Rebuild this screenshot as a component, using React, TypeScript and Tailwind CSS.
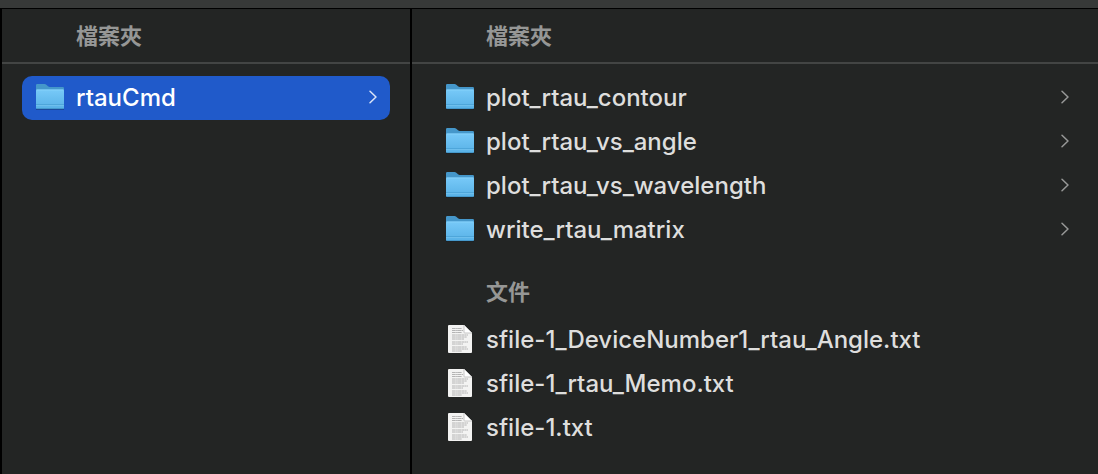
import React from "react";

type Entry = { name: string; kind: "folder" | "text"; selected?: boolean };

function FolderIcon() {
  return (
    <svg viewBox="0 1 32 32" className="size-8 shrink-0" aria-hidden="true">
      <defs>
        <linearGradient id="folderFront" x1="0" y1="0" x2="0" y2="1">
          <stop offset="0" stopColor="#77c9f8" />
          <stop offset="1" stopColor="#58b1e6" />
        </linearGradient>
      </defs>
      <path d="M2 28.5h28" stroke="#000" strokeOpacity="0.25" />
      <path d="M2 4.2Q2 3 3.2 3h7.3q1 0 1.8.7L14 5.2q.8.8 1.8.8h13q1.2 0 1.2 1.2V14H2z" fill="#4597ca" />
      <path d="M2 9.8Q2 8.6 3.2 8.6h25.6q1.2 0 1.2 1.2v17q0 1.2-1.2 1.2H3.2Q2 28 2 26.8z" fill="url(#folderFront)" />
      <path d="M2.5 9h27" stroke="#8bd4fb" strokeWidth="0.8" />
      <path d="M2 23.5h28" stroke="#489fd3" strokeWidth="0.7" />
      <path d="M2 24.5h28" stroke="#72c2ee" strokeWidth="0.8" />
      <path d="M2.6 27.6h26.8" stroke="#3f8fc2" strokeWidth="0.8" />
    </svg>
  );
}

function TextFileIcon() {
  return (
    <svg viewBox="0 1 32 32" className="size-8 shrink-0" aria-hidden="true">
      <path d="M4 3q0-1 1-1h15l8 8v19q0 1-1 1H5q-1 0-1-1z" fill="#f3f3f2" />
      <g stroke="#b4b4b4" strokeWidth="1" strokeDasharray="3 .3 1.6 .3 4 .3">
        <path d="M8 5.5h10M8 7.5h11M8 9.5h10M8 12h16M8 14h15M8 16h12M8 19h16M8 21h11M8 24h15M8 26h16M8 28h10" />
      </g>
      <path d="M20 2l8 8h-7.2q-.8 0-.8-.8z" fill="#fff" />
      <path d="M20 2v7.2q0 .8.8.8H28" fill="none" stroke="#b9b9b9" strokeWidth="0.8" />
    </svg>
  );
}

function Chevron({ bright }: { bright?: boolean }) {
  return (
    <svg viewBox="0 1 10 16" className={`h-4 w-2.5 shrink-0 ${bright ? "text-[#dbe5f8]" : "text-[#989998]"}`} aria-hidden="true">
      <path d="M2 2.3l6 5.7-6 5.7" fill="none" stroke="currentColor" strokeWidth="1.5" strokeLinecap="round" strokeLinejoin="round" />
    </svg>
  );
}

function Row({ entry }: { entry: Entry }) {
  return (
    <li>
      <button
        type="button"
        className={`flex h-11 w-full items-center gap-2.5 rounded-[10px] px-3 text-left text-2xl font-medium ${
          entry.selected ? "bg-[#205aca] text-white" : "text-[#dededd]"
        }`}
      >
        {entry.kind === "folder" ? <FolderIcon /> : <TextFileIcon />}
        <span className="min-w-0 flex-1 truncate">{entry.name}</span>
        {entry.kind === "folder" && <Chevron bright={entry.selected} />}
      </button>
    </li>
  );
}

function Heading({ children }: { children: React.ReactNode }) {
  return <h2 className="pl-[74px] text-[22px] leading-8 font-bold text-[#969796]">{children}</h2>;
}

const parent: Entry[] = [{ name: "rtauCmd", kind: "folder", selected: true }];

const folders: Entry[] = [
  { name: "plot_rtau_contour", kind: "folder" },
  { name: "plot_rtau_vs_angle", kind: "folder" },
  { name: "plot_rtau_vs_wavelength", kind: "folder" },
  { name: "write_rtau_matrix", kind: "folder" },
];

const files: Entry[] = [
  { name: "sfile-1_DeviceNumber1_rtau_Angle.txt", kind: "text" },
  { name: "sfile-1_rtau_Memo.txt", kind: "text" },
  { name: "sfile-1.txt", kind: "text" },
];

function List({ entries, className }: { entries: Entry[]; className: string }) {
  return (
    <ul className={className}>
      {entries.map((entry) => (
        <Row key={entry.name} entry={entry} />
      ))}
    </ul>
  );
}

export default function App() {
  return (
    <div className="flex min-h-screen flex-col bg-[#232524] font-['Inter','Noto_Sans_CJK_TC',sans-serif]">
      <div className="h-2 bg-[#373938]" />
      <main className="flex flex-1 border-t border-black">
        <section className="w-[412px] shrink-0 border-x-2 border-black">
          <header className="border-b-2 border-[#434544] pt-[11px] pb-[10px]">
            <Heading>檔案夾</Heading>
          </header>
          <List entries={parent} className="px-5 pt-3" />
        </section>
        <section className="min-w-0 flex-1">
          <header className="border-b-2 border-[#434544] pt-[11px] pb-[10px]">
            <Heading>檔案夾</Heading>
          </header>
          <List entries={folders} className="pt-3 pr-4 pl-5" />
          <div className="pt-6 pb-[10px]">
            <Heading>文件</Heading>
          </div>
          <List entries={files} className="pr-4 pl-5" />
        </section>
      </main>
    </div>
  );
}
